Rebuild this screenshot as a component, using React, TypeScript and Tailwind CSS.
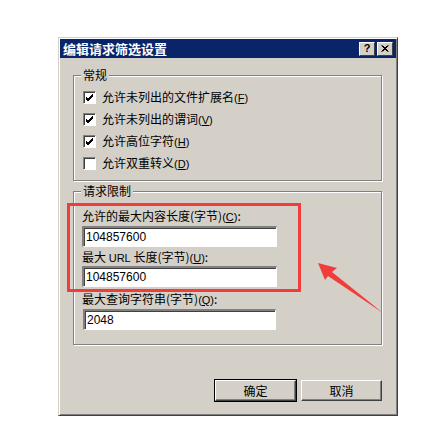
const cjk = { fontFamily: '"Noto Sans CJK SC", "Liberation Sans", sans-serif' }
const latin = { fontFamily: '"Liberation Sans", Tahoma, sans-serif' }

function Key({ k }: { k: string }) {
  return (
    <span className="text-[11px]" style={latin}>
      (<u>{k}</u>)
    </span>
  )
}

function CheckRow({ label, k, checked }: { label: string; k: string; checked: boolean }) {
  return (
    <div className="flex h-[21px] items-center">
      <div className="flex h-[13px] w-[13px] items-center justify-center border-t border-l border-t-[#808080] border-l-[#808080] border-r border-b border-r-white border-b-white bg-white shadow-[inset_1px_1px_0_#404040]">
        {checked && (
          <svg width="9" height="9" viewBox="0 0 9 9">
            <path d="M1 4 L3 6 L8 1 M1 5 L3 7 L8 2 M1 6 L3 8 L8 3" stroke="#000" strokeWidth="1" fill="none" />
          </svg>
        )}
      </div>
      <span className="ml-[6px] text-[12px] leading-[16px] text-black">
        {label}
        <Key k={k} />
      </span>
    </div>
  )
}

function Field({ value, width = 'w-[195px]' }: { value: string; width?: string }) {
  return (
    <div
      className={`${width} flex h-[21px] items-center border-t-2 border-l-2 border-t-[#808080] border-l-[#808080] border-r border-b border-r-white border-b-white bg-white pl-[2px] text-[12px] text-black shadow-[inset_1px_1px_0_#404040]`}
      style={latin}
    >
      {value}
    </div>
  )
}

function Btn({ children, def }: { children: string; def?: boolean }) {
  return (
    <div
      className={[
        'flex h-[21px] w-[81px] items-center justify-center text-[12px] text-black',
        'border-t border-l border-t-white border-l-white border-r border-b border-r-[#404040] border-b-[#404040]',
        'shadow-[inset_-1px_-1px_0_#808080]',
        def ? 'outline outline-1 outline-black' : '',
      ].join(' ')}
    >
      {children}
    </div>
  )
}

export default function App() {
  return (
    <div className="relative h-[426px] w-[426px] overflow-hidden bg-white" style={cjk}>
      <div className="pt-[37px] pl-[58px]">
        {/* Dialog */}
        <div className="flex h-[379px] w-[340px] flex-col border-t border-l border-t-[#d4d0c8] border-l-[#d4d0c8] border-r border-b border-r-[#404040] border-b-[#404040] bg-[#d4d0c8] p-[1px] shadow-[inset_1px_1px_0_#fff,inset_-1px_-1px_0_#808080]">
          {/* Title bar */}
          <div className="flex h-[19px] items-center bg-[#0a246a] pl-[3px] pr-[3px]">
            <span className="flex-1 text-[13px] leading-[18px] font-bold text-white">编辑请求筛选设置</span>
            <div className="flex gap-[1px]">
              <div className="flex h-[14px] w-[16px] items-center justify-center border-t border-l border-t-white border-l-white border-r border-b border-r-[#404040] border-b-[#404040] bg-[#d4d0c8] text-[11px] leading-none font-bold text-black" style={latin}>
                ?
              </div>
              <div className="ml-[1px] flex h-[14px] w-[16px] items-center justify-center border-t border-l border-t-white border-l-white border-r border-b border-r-[#404040] border-b-[#404040] bg-[#d4d0c8]">
                <svg width="8" height="7" viewBox="0 0 8 7">
                  <path d="M0.5 0.5 L6.5 6.5 M1.5 0.5 L7.5 6.5 M6.5 0.5 L0.5 6.5 M7.5 0.5 L1.5 6.5" stroke="#000" strokeWidth="1" />
                </svg>
              </div>
            </div>
          </div>

          <div className="pl-[13px]">
            {/* 常规 */}
            <fieldset className="mt-[9px] w-[309px] border border-[#808080] pl-[9px] pt-[4px] pb-[6px] shadow-[inset_1px_1px_0_#fff,1px_1px_0_#fff]">
              <legend className="-ml-[2px] bg-[#d4d0c8] px-[2px] text-[12px] leading-[16px] text-black">常规</legend>
              <div className="flex flex-col gap-[1px]">
                <CheckRow label="允许未列出的文件扩展名" k="F" checked />
                <CheckRow label="允许未列出的谓词" k="V" checked />
                <CheckRow label="允许高位字符" k="H" checked />
                <CheckRow label="允许双重转义" k="D" checked={false} />
              </div>
            </fieldset>

            {/* 请求限制 */}
            <fieldset className="mt-[2px] w-[309px] border border-[#808080] pl-[8px] pt-[9px] pb-[14px] shadow-[inset_1px_1px_0_#fff,1px_1px_0_#fff]">
              <legend className="-ml-[1px] bg-[#d4d0c8] px-[2px] text-[12px] leading-[16px] text-black">请求限制</legend>
              <div className="text-[12px] leading-[16px] text-black">
                允许的最大内容长度(字节)<Key k="C" />:
              </div>
              <div className="mt-[1px]">
                <Field value="104857600" />
              </div>
              <div className="mt-[2px] text-[12px] leading-[16px] text-black">
                最大 <span style={latin} className="text-[11px]">URL</span> 长度(字节)<Key k="U" />:
              </div>
              <div className="mt-[0px]">
                <Field value="104857600" />
              </div>
              <div className="mt-[4px] text-[12px] leading-[16px] text-black">
                最大查询字符串(字节)<Key k="Q" />:
              </div>
              <div className="mt-[1px] pl-[1px]">
                <Field value="2048" width="w-[193px]" />
              </div>
            </fieldset>
          </div>

          <div className="mt-[35px] flex gap-[5px] pl-[155px]">
            <Btn def>确定</Btn>
            <Btn>取消</Btn>
          </div>
        </div>
      </div>

      {/* Annotation: red box */}
      <div className="absolute left-[67px] top-[203px] h-[89px] w-[234px] border-[3px] border-[#f23c3c]" />
      {/* Annotation: arrow */}
      <svg className="absolute left-0 top-0" width="426" height="426" viewBox="0 0 426 426">
        <polygon points="318,263 337,268 332,272 383,313 328,276 325,280" fill="#f23c3c" />
      </svg>
    </div>
  )
}
